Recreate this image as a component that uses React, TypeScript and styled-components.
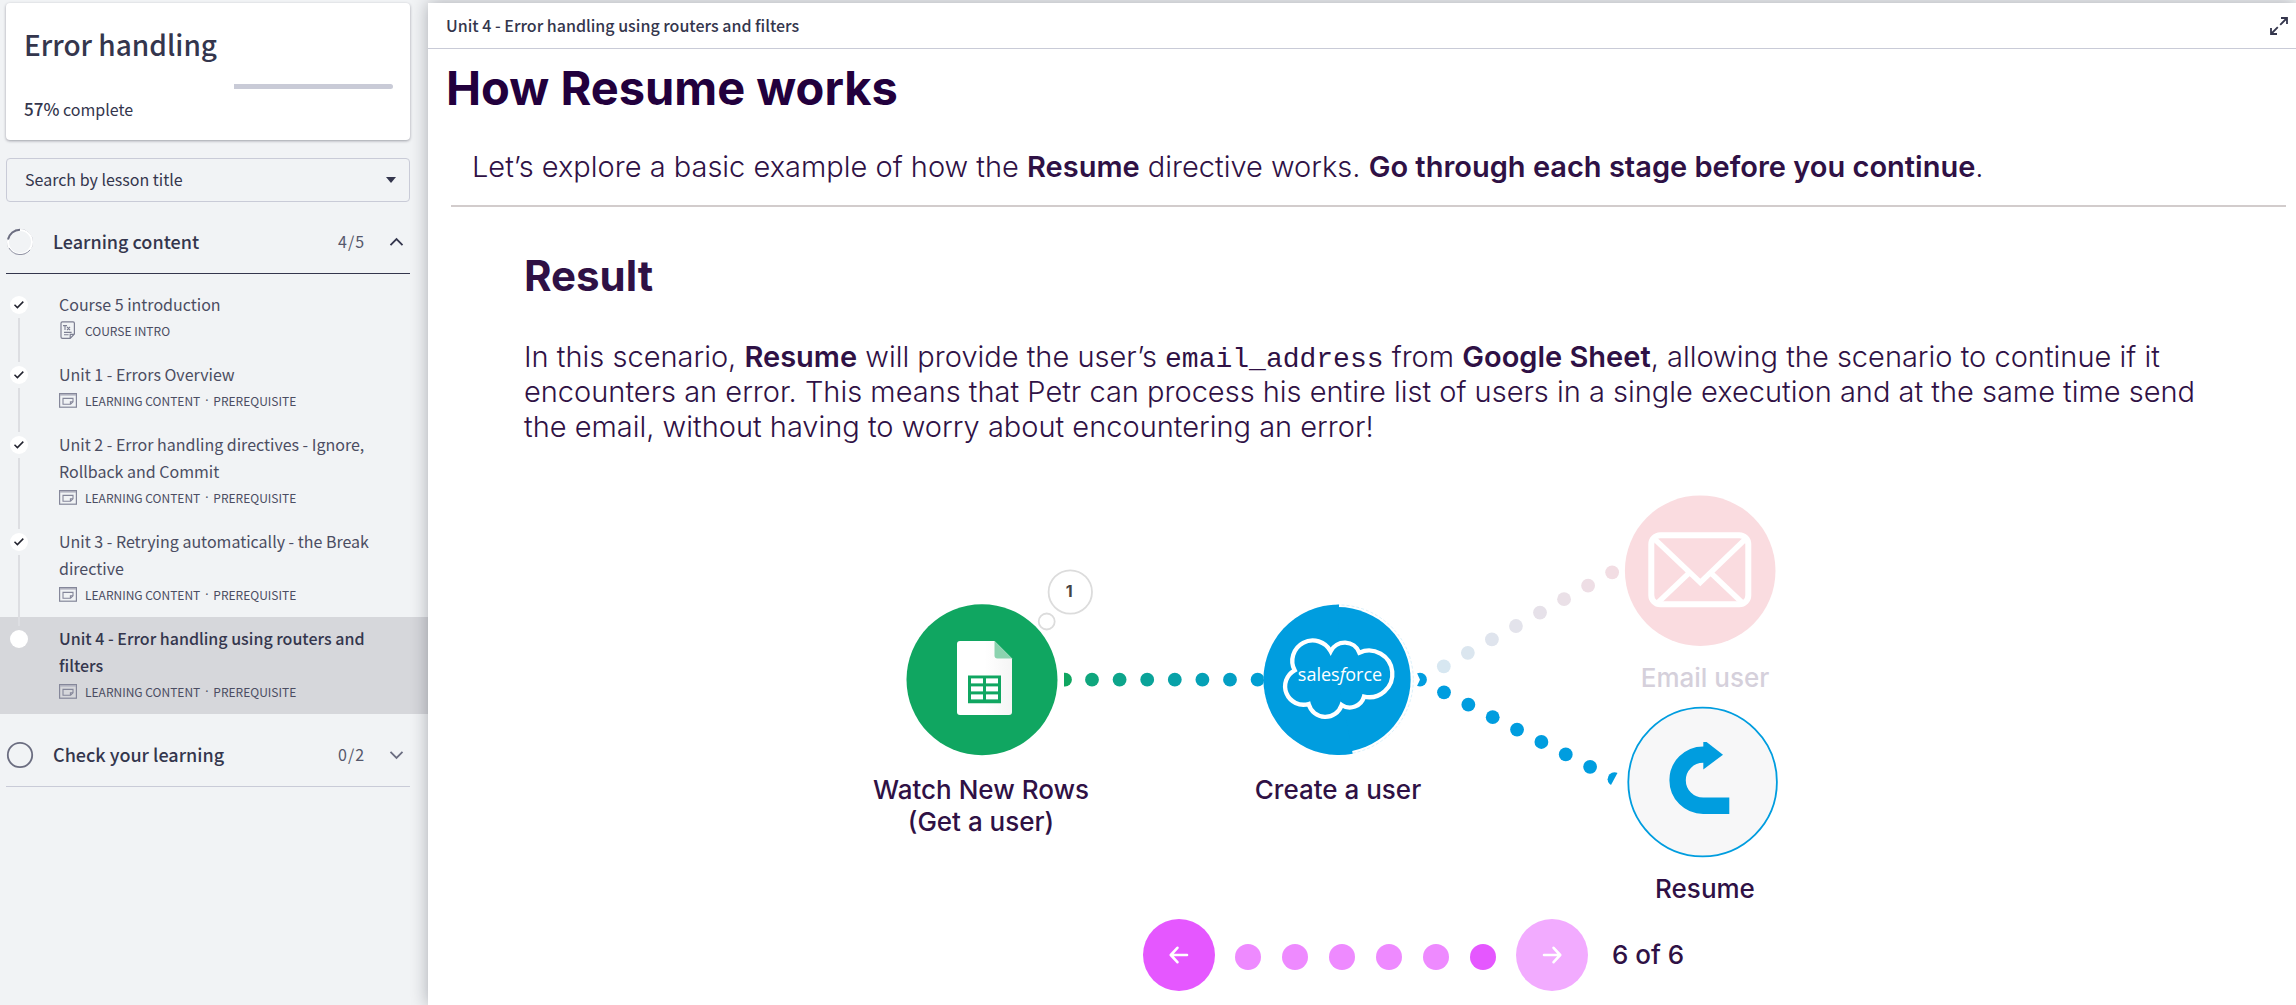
import React from "react";
import styled, { createGlobalStyle } from "styled-components";

const ui = `"Source Sans Pro", "Noto Sans CJK SC", "Noto Sans", sans-serif`;
const slideFont = `Inter, "Liberation Sans", sans-serif`;
const ink = "#34364d";
const muted = "#6b6d80";
const line = "#c9cbd7";
const plum = "#2f1145";
const blue = "#009ddf";

const Global = createGlobalStyle`
  * { box-sizing: border-box; }
  html, body { margin: 0; }
  body { background: #f1f3f5; color: ${ink}; font-family: ${ui}; }
  h1, h2, p, ul, ol, figure { margin: 0; padding: 0; }
  ul, ol { list-style: none; }
  button { font: inherit; color: inherit; border: 0; background: none; padding: 0; cursor: pointer; }
`;

const Page = styled.div`
  display: flex;
  min-height: 100vh;
  overflow: hidden;
`;

const Sidebar = styled.aside`
  flex: 0 0 428px;
  padding-top: 3px;
`;

const Card = styled.section`
  margin: 0 18px 18px 6px;
  padding: 21px 17px 20px 18px;
  height: 137px;
  background: #fff;
  border-radius: 4px;
  box-shadow: 0 1px 3px rgba(30, 32, 50, 0.4);
`;

const CourseTitle = styled.h1`
  font-size: 28px;
  line-height: 40px;
  font-weight: 500;
`;

const Track = styled.div`
  display: flex;
  justify-content: flex-end;
  height: 5px;
  margin: 20px 0 8px;
  border-radius: 3px;
  overflow: hidden;
`;

const Remaining = styled.div`
  background: ${line};
`;

const Complete = styled.p`
  font-size: 16px;
  line-height: 24px;

  b { font-size: 17px; font-weight: 500; }
`;

const SearchBox = styled.div`
  position: relative;
  margin: 0 18px 9px 6px;

  svg {
    position: absolute;
    right: 14px;
    top: 19px;
    pointer-events: none;
  }
`;

const SearchSelect = styled.select`
  display: block;
  width: 100%;
  height: 44px;
  padding: 0 36px 2px 18px;
  appearance: none;
  border: 1px solid ${line};
  border-radius: 4px;
  background: transparent;
  color: ${ink};
  font-family: ${ui};
  font-size: 16px;
`;

const SectionHead = styled.button<{ $open?: boolean }>`
  display: flex;
  align-items: center;
  width: calc(100% - 24px);
  height: 63px;
  margin-left: 6px;
  border-bottom: 1px solid ${(p) => (p.$open ? ink : line)};
  text-align: left;
`;

const SectionName = styled.span`
  flex: 1;
  margin-left: 19px;
  padding-bottom: 2px;
  font-size: 18px;
  line-height: 27px;
  font-weight: 500;
`;

const Count = styled.span`
  width: 51px;
  padding-bottom: 2px;
  font-size: 16px;
  color: #55576b;
  letter-spacing: 1px;
`;

const ChevronSlot = styled.span`
  display: flex;
  width: 21px;
`;

const Lessons = styled.ul`
  padding: 9px 0 10px;
`;

const Lesson = styled.li<{ $current?: boolean }>`
  display: flex;
  padding-left: 10px;
  color: ${(p) => (p.$current ? ink : "#4b4d62")};
  background: ${(p) => (p.$current ? "#d6d7db" : "transparent")};
`;

const Rail = styled.div`
  position: relative;
  z-index: 1;
  display: flex;
  flex-direction: column;
  align-items: center;
  flex: 0 0 18px;
  padding-top: 13px;
`;

const Dot = styled.span`
  display: flex;
  align-items: center;
  justify-content: center;
  width: 18px;
  height: 18px;
  border-radius: 50%;
  background: #fff;
`;

const Connector = styled.span`
  flex: 1;
  width: 2px;
  margin: 4px 0 -9px;
  background: #dddee2;
`;

const LessonBody = styled.a`
  flex: 1;
  padding: 8px 36px 8px 31px;
  color: inherit;
  text-decoration: none;
`;

const LessonTitle = styled.span<{ $current?: boolean }>`
  display: block;
  font-size: 16px;
  line-height: 27px;
  font-weight: ${(p) => (p.$current ? 500 : 400)};
`;

const Meta = styled.span`
  display: flex;
  align-items: center;
  height: 27px;
  padding-bottom: 3px;
  font-size: 12px;
  color: #4b4d62;

  svg { flex: 0 0 18px; margin-right: 8px; }
`;

const Separator = styled.span`
  width: 13px;
  text-align: center;
  font-family: "Noto Sans", sans-serif;
`;

const Main = styled.main`
  flex: 1;
  min-width: 0;
  margin-top: 3px;
  background: #fff;
  box-shadow: 0 0 16px rgba(20, 22, 35, 0.32);
`;

const Bar = styled.header`
  display: flex;
  align-items: center;
  justify-content: space-between;
  height: 46px;
  padding: 0 8px 0 18px;
  border-bottom: 1px solid ${line};
`;

const BarTitle = styled.h2`
  padding-bottom: 2px;
  font-size: 16px;
  line-height: 24px;
  font-weight: 500;
`;

const IconButton = styled.button`
  display: flex;
`;

const Slide = styled.article`
  padding: 10px 10px 0;
  font-family: ${slideFont};
  color: ${plum};
`;

const SlideTitle = styled.h1`
  margin-left: 8px;
  font-size: 47px;
  line-height: 58px;
  font-weight: 700;
  color: #22003d;
`;

const Lead = styled.p`
  margin: 32px 0 0 34px;
  font-size: 29px;
  line-height: 35px;
  font-weight: 300;

  b { font-weight: 600; }
`;

const Rule = styled.hr`
  height: 2px;
  margin: 21px 0 0 13px;
  border: 0;
  background: #d2cccc;
`;

const Result = styled.section`
  padding: 44px 86px 0;
`;

const ResultTitle = styled.h2`
  font-size: 42px;
  line-height: 50px;
  font-weight: 700;
`;

const ResultText = styled.p`
  margin-top: 38px;
  font-size: 29px;
  line-height: 35px;
  font-weight: 300;

  b { font-weight: 600; }
  code { font-family: "Liberation Mono", monospace; font-size: 28px; line-height: 1; }
`;

const Stage = styled.figure`
  width: 1000px;
  margin: 40px auto 0;
`;

const Canvas = styled.div`
  position: relative;

  svg { display: block; }
`;

const NodeLabel = styled.span<{ $x: number; $y: number; $faded?: boolean }>`
  position: absolute;
  left: ${(p) => p.$x - 150}px;
  top: ${(p) => p.$y}px;
  width: 300px;
  text-align: center;
  font-size: 26px;
  line-height: 32px;
  font-weight: 500;
  color: ${(p) => (p.$faded ? "#d5d0db" : plum)};
`;

const Pager = styled.nav`
  display: flex;
  align-items: center;
  padding-left: 281px;
`;

const Round = styled.button<{ $dim?: boolean }>`
  display: flex;
  align-items: center;
  justify-content: center;
  width: 72px;
  height: 72px;
  border-radius: 50%;
  background: ${(p) => (p.$dim ? "#f2abff" : "#e557ff")};
`;

const Steps = styled.ol`
  display: flex;
  gap: 21px;
  margin: 4px 20px 0;
`;

const Step = styled.li<{ $active?: boolean }>`
  width: 26px;
  height: 26px;
  border-radius: 50%;
  background: ${(p) => (p.$active ? "#e557ff" : "#ee8aff")};
`;

const PageCount = styled.span`
  margin-left: 24px;
  font-size: 26px;
  line-height: 32px;
  font-weight: 500;
`;

const Check = () => (
  <svg width="12" height="10" viewBox="0 0 12 10" fill="none" stroke="#22232f" strokeWidth="1.5">
    <path d="M1.5 4.8 4.4 7.6 10.3 1.6" />
  </svg>
);

const Chevron = ({ up }: { up?: boolean }) => (
  <svg width="15" height="10" viewBox="0 0 15 10" fill="none" stroke={up ? ink : muted} strokeWidth="1.8">
    <path d={up ? "M1.5 8.2 7.5 2 13.5 8.2" : "M1.5 1.8 7.5 8 13.5 1.8"} />
  </svg>
);

const PartialRing = () => (
  <svg width="28" height="28" viewBox="0 0 28 28" fill="none">
    <circle cx="14" cy="14" r="12.6" stroke="#9a9ba9" strokeWidth="1" />
    <circle cx="14" cy="14" r="12" stroke="#fff" strokeWidth="2" />
    <path d="M2 11.5A12.3 12.3 0 0 1 14 1.7" stroke="#6b6d80" strokeWidth="2" />
    <path d="M3 20A12.8 12.8 0 0 0 24 22" stroke="#85879a" strokeWidth="0.9" />
  </svg>
);

const EmptyRing = () => (
  <svg width="28" height="28" viewBox="0 0 28 28" fill="none">
    <circle cx="14" cy="14" r="12.2" stroke={muted} strokeWidth="1.8" />
  </svg>
);

const IntroIcon = () => (
  <svg width="18" height="18" viewBox="0 0 18 18" fill="none" stroke="#7d7f92" strokeWidth="1.2">
    <path d="M15.4 13V2.2Q15.4.8 14 .8H3.4Q2 .8 2 2.2V16Q2 17.3 3.4 17.3H11.2L15.4 13ZM11.2 17V13.3H15.2" />
    <path d="M4 4.6H8M6 4.6V9M8 6 11 9M11 6 8 9M5 11.4H12.6M5 13.8H9.6" strokeWidth="1.1" />
  </svg>
);

const ContentIcon = () => (
  <svg width="18" height="15" viewBox="0 0 18 15" fill="none" stroke="#85879a">
    <rect x=".6" y=".6" width="16.8" height="13.6" strokeWidth="1.2" />
    <path d="M1 1.8H17" stroke="#b0b1be" strokeWidth="1.6" />
    <path d="M4 5.4H14V8.8L11.6 11.2H4ZM11.4 11V8.8H14" strokeWidth="1.1" />
  </svg>
);

const ExpandIcon = () => (
  <svg width="18" height="18" viewBox="0 0 18 18" fill="none" stroke={ink} strokeWidth="1.8">
    <path d="M11 1H17V7M17 1 10.2 7.8M7 17H1V11M1 17 7.8 10.2" />
  </svg>
);

const Arrow = ({ left }: { left?: boolean }) => (
  <svg width="20" height="18" viewBox="0 0 20 18" fill="none" stroke="#fff" strokeWidth="2.6" strokeLinecap="round" strokeLinejoin="round">
    <path d={left ? "M18 9H2M8.4 1.8 1.8 9 8.4 16.2" : "M2 9H18M11.6 1.8 18.2 9 11.6 16.2"} />
  </svg>
);

const mix = (a: number[], b: number[], t: number) =>
  `rgb(${a.map((v, i) => Math.round(v + (b[i] - v) * t)).join(",")})`;

/* The drawing uses its own coordinate space; the viewBox maps it to the stage. */
const Diagram = () => (
  <svg width="1000" height="435" viewBox="862 484 1000 435" aria-hidden="true">
    <defs>
      <clipPath id="startHalf"><rect x="1064" y="660" width="20" height="40" /></clipPath>
      <clipPath id="endHalf"><path d="M1590 760H1624.5L1604.5 797H1590Z" /></clipPath>
      <linearGradient id="sheet" x1="0" x2="1">
        <stop offset=".5" stopColor="#fff" />
        <stop offset="1" stopColor="#f5f5f5" />
      </linearGradient>
    </defs>

    <circle cx="1065" cy="679.7" r="6.9" fill="#10a661" clipPath="url(#startHalf)" />
    {Array.from({ length: 7 }, (_, i) => (
      <circle key={i} cx={1092 + i * 27.6} cy="679.7" r="6.9" fill={mix([15, 166, 125], [0, 158, 210], i / 6)} />
    ))}
    {Array.from({ length: 8 }, (_, i) => (
      <circle key={i} cx={1443.8 + i * 24.05} cy={666.3 - i * 13.43} r="6.9" fill={mix([215, 231, 241], [242, 221, 227], i / 7)} />
    ))}
    {Array.from({ length: 7 }, (_, i) => (
      <circle key={i} cx={1444 + i * 24.35} cy={692.3 + i * 12.42} r="6.9" fill={blue} />
    ))}
    <circle cx="1614.5" cy="779.2" r="6.9" fill={blue} clipPath="url(#endHalf)" />
    <circle cx="1420" cy="679.7" r="6.9" fill={blue} />
    <path d="M1410 670 1417 673 1420 679.7 1417 686 1410 690Z" fill="#fff" />

    <circle cx="982" cy="679.7" r="75.5" fill="#10a661" />
    <path d="M960 641H994.5L1012 658.5V712Q1012 715 1009 715H960Q957 715 957 712V644Q957 641 960 641Z" fill="url(#sheet)" />
    <path d="M994.5 641 1012 658.5H997.5Q994.5 658.5 994.5 655.5Z" fill="#8bd3af" />
    <path d="M968 675.5H1001V703.2H968Z" fill="#10a661" />
    {[678.4, 686.4, 694.4].map((y) => (
      <React.Fragment key={y}>
        <rect x="971" y={y} width="12" height="5" fill="#fff" />
        <rect x="986" y={y} width="12" height="5" fill="#fff" />
      </React.Fragment>
    ))}
    <circle cx="1070.3" cy="592" r="21.7" fill="#fff" stroke="#dcdcdc" strokeWidth="1.8" />
    <circle cx="1046.7" cy="621.5" r="8" fill="#fff" stroke="#dcdcdc" strokeWidth="1.8" />
    <text x="1069.3" y="597" textAnchor="middle" fontFamily={slideFont} fontSize="16" fontWeight="700" fill="#444">1</text>

    <circle cx="1338.5" cy="679.7" r="74.8" fill="none" stroke="#b5e0f4" strokeWidth=".5" strokeDasharray="3 2" />
    <circle cx="1338" cy="679.7" r="72.6" fill={blue} />
    <path d="M1339 604.4A75.3 75.3 0 1 0 1352.7 753.7L1338 679.7Z" fill={blue} />
    <g transform="translate(1230 590) scale(.3333)">
      <path
        d="M302 184A47 47 0 0 1 388 188A70 70 0 1 1 402 320A44 44 0 0 1 335 345A51.6 51.6 0 0 1 236 342A55 55 0 0 1 194 241A61 61 0 0 1 302 184Z"
        fill="none" stroke="#fff" strokeWidth="13" strokeLinejoin="miter"
      />
    </g>
    <text x="1340" y="680.7" textAnchor="middle" fontFamily={`"Open Sans", sans-serif`} fontSize="18" fontWeight="500" fill="#fff">
      sales<tspan fontStyle="italic">f</tspan>orce
    </text>

    <circle cx="1700.2" cy="570.7" r="75.3" fill="#fadce0" />
    <g fill="none" stroke="#fff" strokeWidth="6">
      <rect x="1651.3" y="535.3" width="97" height="69" rx="9" />
      <path d="M1653.5 538 1700.3 582.5 1746.5 538M1688.5 573.5 1658 602.5M1711.5 573.5 1742 602.5" strokeWidth="5.4" />
    </g>

    <circle cx="1702.6" cy="782" r="74.3" fill="#f7f7f8" stroke={blue} strokeWidth="1.8" />
    <path d="M1729.3 805.8H1703.2A25.6 25.6 0 0 1 1703.2 754.6H1706" fill="none" stroke={blue} strokeWidth="16.4" />
    <path d="M1703.3 742H1706.6L1723 754.7 1703.3 769.5Z" fill={blue} />
  </svg>
);

const lessons = [
  { title: "Course 5 introduction", meta: ["COURSE INTRO"], intro: true },
  { title: "Unit 1 - Errors Overview" },
  { title: "Unit 2 - Error handling directives - Ignore, Rollback and Commit" },
  { title: "Unit 3 - Retrying automatically - the Break directive" },
  { title: "Unit 4 - Error handling using routers and filters", current: true },
];

export default function App() {
  const percent = 57;
  return (
    <>
      <Global />
      <Page>
        <Sidebar>
          <Card>
            <CourseTitle>Error handling</CourseTitle>
            <Track role="progressbar" aria-valuenow={percent} aria-label="Course progress">
              <Remaining style={{ width: `${100 - percent}%` }} />
            </Track>
            <Complete><b>{percent}%</b> complete</Complete>
          </Card>

          <SearchBox>
            <SearchSelect aria-label="Search by lesson title">
              <option>Search by lesson title</option>
            </SearchSelect>
            <svg width="10" height="6" viewBox="0 0 10 6" fill={ink}><path d="M0 0H10L5 6Z" /></svg>
          </SearchBox>

          <SectionHead $open aria-expanded="true">
            <PartialRing />
            <SectionName>Learning content</SectionName>
            <Count>4/5</Count>
            <ChevronSlot><Chevron up /></ChevronSlot>
          </SectionHead>

          <Lessons>
            {lessons.map((l, i) => (
              <Lesson key={l.title} $current={l.current}>
                <Rail>
                  <Dot>{!l.current && <Check />}</Dot>
                  {i < lessons.length - 1 && <Connector />}
                </Rail>
                <LessonBody href="#">
                  <LessonTitle $current={l.current}>{l.title}</LessonTitle>
                  <Meta>
                    {l.intro ? <IntroIcon /> : <ContentIcon />}
                    {(l.meta ?? ["LEARNING CONTENT", "PREREQUISITE"]).map((tag, n) => (
                      <React.Fragment key={tag}>
                        {n > 0 && <Separator>·</Separator>}
                        <span>{tag}</span>
                      </React.Fragment>
                    ))}
                  </Meta>
                </LessonBody>
              </Lesson>
            ))}
          </Lessons>

          <SectionHead aria-expanded="false">
            <EmptyRing />
            <SectionName>Check your learning</SectionName>
            <Count>0/2</Count>
            <ChevronSlot><Chevron /></ChevronSlot>
          </SectionHead>
        </Sidebar>

        <Main>
          <Bar>
            <BarTitle>Unit 4 - Error handling using routers and filters</BarTitle>
            <IconButton aria-label="Full screen"><ExpandIcon /></IconButton>
          </Bar>
          <Slide>
            <SlideTitle>How Resume works</SlideTitle>
            <Lead>
              Let’s explore a basic example of how the <b>Resume</b> directive works.{" "}
              <b>Go through each stage before you continue</b>.
            </Lead>
            <Rule />
            <Result>
              <ResultTitle>Result</ResultTitle>
              <ResultText>
                In this scenario, <b>Resume</b> will provide the user’s <code>email_address</code> from{" "}
                <b>Google Sheet</b>, allowing the scenario to continue if it encounters an error. This means that
                Petr can process his entire list of users in a single execution and at the same time send the email,
                without having to worry about encountering an error!
              </ResultText>
            </Result>
            <Stage>
              <Canvas>
                <Diagram />
                <NodeLabel $x={119} $y={290}>Watch New Rows<br />(Get a user)</NodeLabel>
                <NodeLabel $x={476} $y={290}>Create a user</NodeLabel>
                <NodeLabel $x={843} $y={178} $faded>Email user</NodeLabel>
                <NodeLabel $x={843} $y={389}>Resume</NodeLabel>
              </Canvas>
              <Pager aria-label="Stages">
                <Round aria-label="Previous"><Arrow left /></Round>
                <Steps>
                  {[1, 2, 3, 4, 5, 6].map((n) => <Step key={n} $active={n === 6} />)}
                </Steps>
                <Round $dim aria-label="Next"><Arrow /></Round>
                <PageCount>6 of 6</PageCount>
              </Pager>
            </Stage>
          </Slide>
        </Main>
      </Page>
    </>
  );
}
